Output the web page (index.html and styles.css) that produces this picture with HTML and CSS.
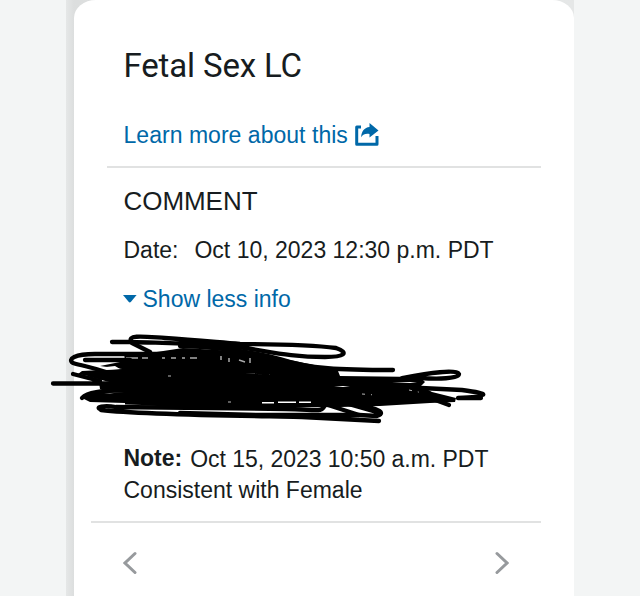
FILE: index.html
```html
<!DOCTYPE html>
<html lang="en">
<head>
<meta charset="utf-8">
<title>Fetal Sex LC</title>
<link rel="stylesheet" href="styles.css">
</head>
<body>
<div class="shade">
<main class="card">
  <header class="head">
    <h1 class="title">Fetal Sex LC</h1>
    <a class="learn"><span>Learn more about this</span>
      <svg class="share" width="24" height="24" viewBox="0 0 24 24"><path d="M6 4H1.700V21.300H22V13" fill="none" stroke="#0068a8" stroke-width="3" stroke-linejoin="round"/><path d="M14.500 0L23.500 7.500L14.500 14.500V11C10.500 10.500 8.200 11.200 6.200 14.200C6.400 8.400 9.500 4.500 14.500 4Z" fill="#0068a8"/></svg>
    </a>
  </header>
  <section class="comment">
    <h2 class="label">COMMENT</h2>
    <p class="date"><span>Date:</span><span>Oct 10, 2023 12:30 p.m. PDT</span></p>
    <a class="toggle"><svg width="14" height="8" viewBox="0 0 14 8"><path d="M0 0H13.6L8 6.800Q6.800 8 5.600 6.800Z" fill="#0068a8"/></svg><span>Show less info</span></a>
    <div class="redacted">
      <svg class="scribble" width="460" height="110" viewBox="40 325 460 110">
        <path d="M100 366L125 361L124 353L150 353L183 348L235 351L270 356L314 365L338 371L340 376L420 377L425 382L421 386L432 392L456 398L455 402L430 403L380 406L340 407L250 408L190 407L125 405L125 403L90 402L82 398L90 393L125 391L100 389L99 382L88 376L78 374L82 371L122 369Z"/>
        <g class="gap">
          <path d="M97 368L115 366L120 369L104 370ZM90 377L113 383L96 382ZM104 394L124 392L110 393ZM108 404L142 405L122 406Z"/>
          <path d="M245 373L272 375L257 374ZM262 402L274 402V403.500H262ZM278 401.500L296 401.500V403H278ZM299 401.500H311V403H299ZM334 386L350 386L343 387ZM392 382L417 382L410 383Z"/>
          <path class="letters" d="M126 358H138M142 358H148M162 358H165M171 358H176M182 358H185M190 358H197M221 356V360M229 358V362M239 360L245 362M250 358V363"/>
          <path class="specks" d="M168 376H177M362 394L375 395M409 390L423 393M228 402H235"/>
        </g>
        <g class="ink">
          <path d="M112 342H132C125 334 148 337 165 338C195 340 215 342 240 344C280 344 315 345 336 348C350 353 344 357 325 357C285 357 265 350 230 346C188 343 160 343 132 342"/>
          <path d="M132 343L150 352M180 346C220 347 250 351 280 359C310 369 340 370 393 370"/>
          <path d="M180 354H95C75 354 67 359 73 363C87 367 105 370 115 376"/>
          <path d="M85 360H130M73 374L100 381M53 383.500H118L140 389M82 398C88 392 105 390 125 390"/>
          <path d="M101 409.500C94 407 104 405 116 407L285 409C315 409 323 414 325 404M101 410C145 415 260 416 302 417L379 421M180 413L260 415H359"/>
          <path d="M325 404L359 415L377 416C390 412 370 406 345 403L380 413"/>
          <path d="M402 378C430 373 456 369 459 374C459 379 437 379 420 378M421 388L462 390C492 394 490 396 458 398L481 398M430 398L449 405"/>
        </g>
      </svg>
    </div>
    <p class="note"><strong>Note:</strong><span>Oct 15, 2023 10:50 a.m. PDT</span></p>
    <p class="result">Consistent with Female</p>
  </section>
  <nav class="pager">
    <svg width="14" height="24" viewBox="0 0 14 24"><path d="M12 2.500L2 12L12 21.500"/></svg>
    <svg width="14" height="24" viewBox="0 0 14 24"><path d="M2 2.500L12 12L2 21.500"/></svg>
  </nav>
</main>
</div>
</body>
</html>
```
FILE: styles.css
```css
* { box-sizing: border-box; }
body { margin: 0; height: 596px; overflow: hidden; background: #f3f5f5; color: #171c20; font: 23px/31px "Liberation Sans", Arial, sans-serif; }
h1, h2, p { margin: 0; font-weight: 400; }
svg { display: block; }
.shade { width: 508px; height: 596px; margin-left: 66px; padding-left: 8px; background: linear-gradient(90deg, #e5e7e7, #dcdede 8px, #e5e7e7 100%); }
.card { width: 500px; height: 596px; padding: 46px 33px 0; border-radius: 22px 22px 0 0 / 18px 18px 0 0; background: #fff; }
.head { height: 122px; padding-left: 16.5px; border-bottom: 2px solid #e1e2e2; }
.title { font: 400 33px/40px Roboto, sans-serif; letter-spacing: -.15px; }
.learn, .toggle { display: flex; color: #0068a8; }
.learn { margin-top: 34px; gap: 7px; letter-spacing: .03px; }
.share { margin-top: 3px; }
.comment { height: 353px; padding: 17px 15.5px 0 16.5px; }
.label { font-size: 26px; line-height: 32px; letter-spacing: -.05px; }
.date { display: flex; gap: 16px; margin-top: 18px; white-space: nowrap; }
.toggle { align-items: center; gap: 5px; margin-top: 18px; }
.toggle svg { margin-left: -.5px; margin-right: .5px; margin-top: -2px; }
.redacted { position: relative; height: 129px; }
.scribble { position: absolute; left: -83.5px; top: 10px; }
.ink { fill: none; stroke: #000; stroke-width: 4.3; stroke-linecap: round; stroke-linejoin: round; }
.gap { fill: #fff; }
.letters { fill: none; stroke: #aaa; stroke-width: 1.5; }
.specks { fill: none; stroke: #bbb; stroke-width: 1; stroke-dasharray: 3 6 1 5; }
.note { display: flex; gap: 8px; white-space: nowrap; letter-spacing: -.03px; }
.note strong { position: relative; top: -1px; }
.pager { display: flex; justify-content: space-between; margin-left: -16px; padding: 28px 32px 0; border-top: 2px solid #e1e2e2; }
.pager path { fill: none; stroke: #979a9d; stroke-width: 3; stroke-linecap: round; }
```
